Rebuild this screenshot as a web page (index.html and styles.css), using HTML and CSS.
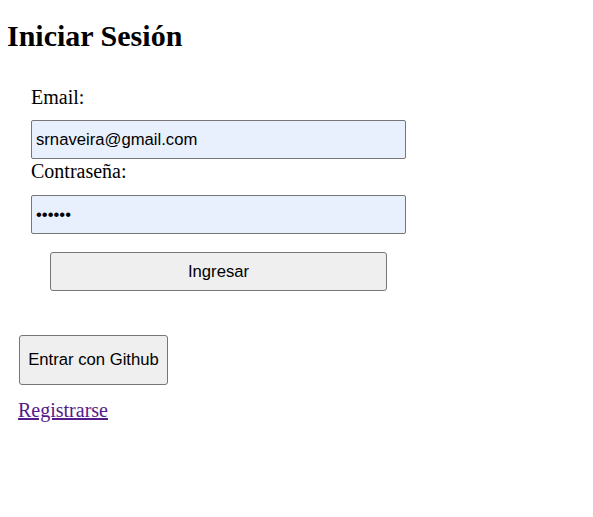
FILE: index.html
```html
<!DOCTYPE html>
<html lang="es">
<head>
<meta charset="utf-8">
<title>Iniciar Sesión</title>
<link rel="stylesheet" href="styles.css">
</head>
<body>
<h1 class="title">Iniciar Sesión</h1>
<form class="login-form">
  <label class="field-label" for="email">Email:</label>
  <input class="field-input" id="email" type="email" value="srnaveira@gmail.com">
  <label class="field-label field-label-second" for="password">Contraseña:</label>
  <input class="field-input" id="password" type="password" value="123456">
  <div class="submit-row">
    <button class="btn btn-submit" type="button">Ingresar</button>
  </div>
</form>
<div class="github-row">
  <button class="btn btn-github" type="button">Entrar con Github</button>
</div>
<a class="register-link" href="#">Registrarse</a>
</body>
</html>
```
FILE: styles.css
```css
html, body {
  margin: 0;
  padding: 0;
  background: #ffffff;
}
body {
  padding: 0 8px;
  font-family: "Liberation Serif", "Times New Roman", serif;
  font-size: 20px;
  color: #000;
}
.title {
  margin: 0;
  padding: 18px 0 0 0;
  font-size: 30px;
  font-weight: bold;
  line-height: 35px;
  margin-left: -1px;
}
.login-form {
  display: flex;
  flex-direction: column;
  align-items: flex-start;
  padding: 32px 0 0 23px;
  width: 375px;
}
.field-label {
  display: block;
  font-size: 20px;
  line-height: 24px;
  margin-bottom: 11px;
}
.field-label-second {
  margin-bottom: 12px;
}
.field-input {
  box-sizing: border-box;
  width: 375px;
  height: 39px;
  margin: 0;
  padding: 1px 4px 0;
  border: 1px solid #767676;
  border-radius: 2px;
  background: #e8f0fe;
  font-family: "Liberation Sans", Arial, sans-serif;
  font-size: 16.67px;
  color: #000;
}
.submit-row {
  width: 375px;
  display: flex;
  justify-content: center;
  margin-top: 18px;
}
.btn {
  box-sizing: border-box;
  margin: 0;
  border: 1px solid #767676;
  border-radius: 3px;
  background: #efefef;
  font-family: "Liberation Sans", Arial, sans-serif;
  font-size: 16.67px;
  color: #000;
}
.btn-submit {
  width: 337px;
  height: 39px;
}
.github-row {
  padding: 44px 0 0 11px;
}
.btn-github {
  width: 149px;
  height: 50px;
  padding: 0 6px;
}
.register-link {
  display: inline-block;
  margin-top: 14px;
  margin-left: 10px;
  color: #551a8b;
  font-size: 20px;
  line-height: 23px;
}
```
